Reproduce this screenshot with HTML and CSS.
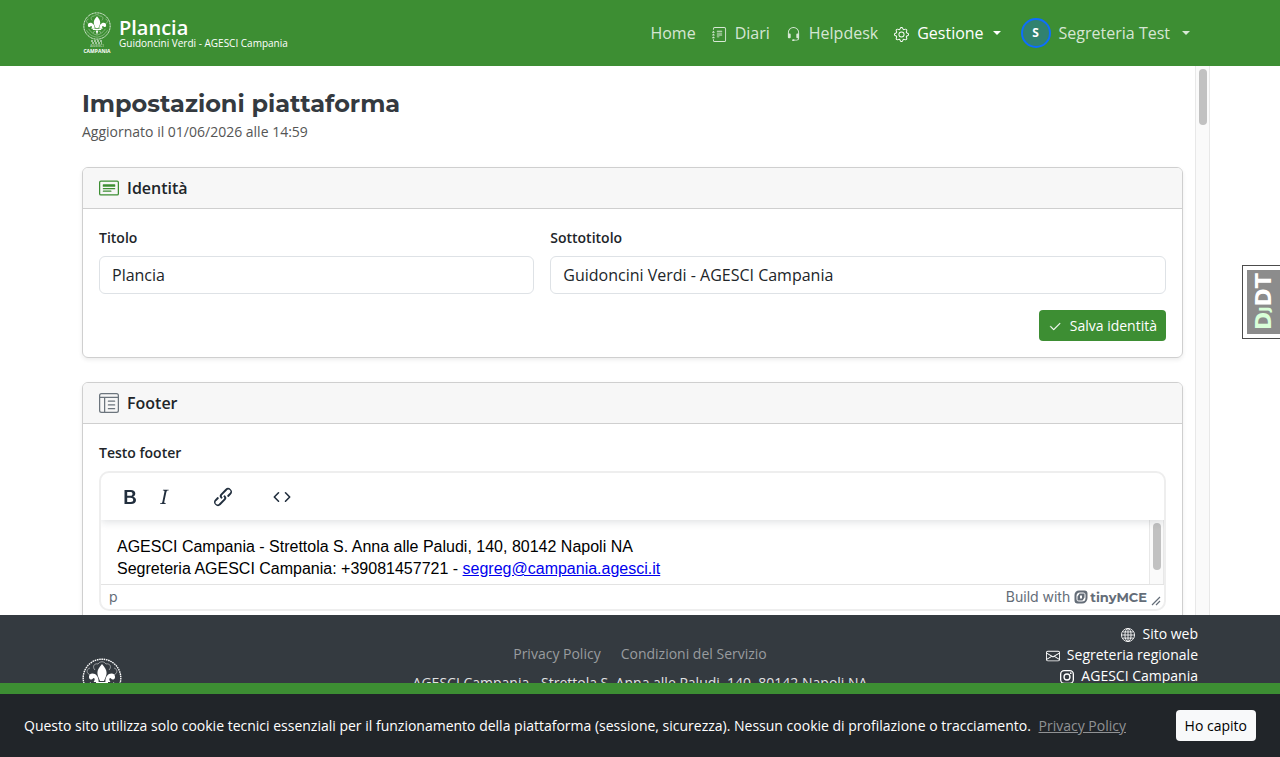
FILE: index.html
```html
<!DOCTYPE html>
<html lang="it">
<head>
    <meta charset="UTF-8">
    <meta name="viewport" content="width=device-width, initial-scale=1.0">
    <title>Impostazioni piattaforma</title>
    <link rel="stylesheet" href="styles.css">
</head>
<body>

<svg class="sprite" aria-hidden="true">
    <symbol id="emblem" viewBox="0 0 40 40">
        <circle cx="20" cy="20" r="18.8" fill="none" stroke="currentColor" stroke-width="1.4" stroke-dasharray="1.6 .7"/>
        <path d="M13 12c-3-3-1-7 3-6 2-3 6-3 8 0 4-1 6 3 3 6M9 17c-5-1-5-6-1-7M31 17c5-1 5-6 1-7M5 26c4 7 9 9 15 10 6-1 11-3 15-10M8 24c4 6 8 8 12 9 4-1 8-3 12-9" fill="none" stroke="currentColor" stroke-width=".7" opacity=".7"/>
        <path d="M20 6c-3 3.500-4.600 6-4.600 9 0 3 1.600 5 2.600 8h4c1-3 2.600-5 2.600-8 0-3-1.600-5.500-4.600-9z" fill="currentColor"/>
        <path d="M16.600 23c0-4-2.600-7.500-6-7.500-2.600 0-4 2-3.600 4 .4 2.300 3 2.800 4 1 .6-1.200 2-.4 1.600 1.500-.2.800-.6 1.400-1 2h5zM23.400 23c0-4 2.600-7.500 6-7.500 2.600 0 4 2 3.600 4-.4 2.300-3 2.800-4 1-.6-1.200-2-.4-1.600 1.500.2.800.6 1.400 1 2h-5z" fill="currentColor"/>
        <path d="M14 24h12v1.600H14zM18 26.500h4l-2 6zM16.500 26.500c0 2-1 3-2.500 3.500M23.500 26.500c0 2 1 3 2.500 3.500" fill="currentColor"/>
    </symbol>
    <symbol id="journal" viewBox="0 0 16 16">
        <path d="M5 10.500a.5.5 0 0 1 .5-.5h2a.5.5 0 0 1 0 1h-2a.5.5 0 0 1-.5-.5m0-2a.5.5 0 0 1 .5-.5h5a.5.5 0 0 1 0 1h-5a.5.5 0 0 1-.5-.5m0-2a.5.5 0 0 1 .5-.5h5a.5.5 0 0 1 0 1h-5a.5.5 0 0 1-.5-.5m0-2a.5.5 0 0 1 .5-.5h5a.5.5 0 0 1 0 1h-5a.5.5 0 0 1-.5-.5"/>
        <path d="M3 0h10a2 2 0 0 1 2 2v12a2 2 0 0 1-2 2H3a2 2 0 0 1-2-2v-1h1v1a1 1 0 0 0 1 1h10a1 1 0 0 0 1-1V2a1 1 0 0 0-1-1H3a1 1 0 0 0-1 1v1H1V2a2 2 0 0 1 2-2"/>
        <path d="M1 5v-.5a.5.5 0 0 1 1 0V5h.5a.5.5 0 0 1 0 1h-2a.5.5 0 0 1 0-1zm0 3v-.5a.5.5 0 0 1 1 0V8h.5a.5.5 0 0 1 0 1h-2a.5.5 0 0 1 0-1zm0 3v-.5a.5.5 0 0 1 1 0v.5h.5a.5.5 0 0 1 0 1h-2a.5.5 0 0 1 0-1z"/>
    </symbol>
    <symbol id="headset" viewBox="0 0 16 16">
        <path d="M8 1a5 5 0 0 0-5 5v1h1a1 1 0 0 1 1 1v3a1 1 0 0 1-1 1H3a1 1 0 0 1-1-1V6a6 6 0 1 1 12 0v6a2.500 2.500 0 0 1-2.500 2.500H9.366a1 1 0 0 1-.866.5h-1a1 1 0 1 1 0-2h1a1 1 0 0 1 .866.5H11.500A1.500 1.500 0 0 0 13 12h-1a1 1 0 0 1-1-1V8a1 1 0 0 1 1-1h1V6a5 5 0 0 0-5-5"/>
    </symbol>
    <symbol id="gear" viewBox="0 0 16 16">
        <path d="M8 4.754a3.246 3.246 0 1 0 0 6.492 3.246 3.246 0 0 0 0-6.492M5.754 8a2.246 2.246 0 1 1 4.492 0 2.246 2.246 0 0 1-4.492 0"/>
        <path d="M9.796 1.343c-.527-1.790-3.065-1.790-3.592 0l-.094.319a.873.873 0 0 1-1.255.52l-.292-.16c-1.640-.892-3.433.902-2.540 2.541l.159.292a.873.873 0 0 1-.52 1.255l-.319.094c-1.790.527-1.790 3.065 0 3.592l.319.094a.873.873 0 0 1 .52 1.255l-.16.292c-.892 1.640.901 3.434 2.541 2.540l.292-.159a.873.873 0 0 1 1.255.52l.094.319c.527 1.790 3.065 1.790 3.592 0l.094-.319a.873.873 0 0 1 1.255-.52l.292.16c1.640.893 3.434-.902 2.540-2.541l-.159-.292a.873.873 0 0 1 .52-1.255l.319-.094c1.790-.527 1.790-3.065 0-3.592l-.319-.094a.873.873 0 0 1-.52-1.255l.16-.292c.893-1.640-.902-3.433-2.541-2.540l-.292.159a.873.873 0 0 1-1.255-.52zm-2.633.283c.246-.835 1.428-.835 1.674 0l.094.319a1.873 1.873 0 0 0 2.693 1.115l.291-.16c.764-.415 1.600.42 1.184 1.185l-.159.292a1.873 1.873 0 0 0 1.116 2.692l.318.094c.835.246.835 1.428 0 1.674l-.319.094a1.873 1.873 0 0 0-1.115 2.693l.16.291c.415.764-.42 1.600-1.185 1.184l-.291-.159a1.873 1.873 0 0 0-2.693 1.116l-.094.318c-.246.835-1.428.835-1.674 0l-.094-.319a1.873 1.873 0 0 0-2.692-1.115l-.292.16c-.764.415-1.600-.42-1.184-1.185l.159-.291A1.873 1.873 0 0 0 1.945 8.930l-.319-.094c-.835-.246-.835-1.428 0-1.674l.319-.094A1.873 1.873 0 0 0 3.060 4.377l-.16-.292c-.415-.764.42-1.600 1.185-1.184l.292.159a1.873 1.873 0 0 0 2.692-1.115z"/>
    </symbol>
    <symbol id="card-heading" viewBox="0 0 16 16">
        <path d="M14.500 3a.5.5 0 0 1 .5.5v9a.5.5 0 0 1-.5.5h-13a.5.5 0 0 1-.5-.5v-9a.5.5 0 0 1 .5-.5zm-13-1A1.500 1.500 0 0 0 0 3.500v9A1.500 1.500 0 0 0 1.500 14h13a1.500 1.500 0 0 0 1.500-1.500v-9A1.500 1.500 0 0 0 14.500 2z"/>
        <path d="M3 8.500a.5.5 0 0 1 .5-.5h9a.5.5 0 0 1 0 1h-9a.5.5 0 0 1-.5-.5m0 2a.5.5 0 0 1 .5-.5h6a.5.5 0 0 1 0 1h-6a.5.5 0 0 1-.5-.5m0-5a.5.5 0 0 1 .5-.5h9a.5.5 0 0 1 .5.5v1a.5.5 0 0 1-.5.5h-9a.5.5 0 0 1-.5-.5z"/>
    </symbol>
    <symbol id="layout-sidebar" viewBox="0 0 16 16">
        <path d="M12.500 6a.5.5 0 0 1 0 1h-5a.5.5 0 0 1 0-1zm0 3a.5.5 0 0 1 0 1h-5a.5.5 0 0 1 0-1zm0 3a.5.5 0 0 1 0 1h-5a.5.5 0 0 1 0-1z"/>
        <path d="M2 0a2 2 0 0 0-2 2v12a2 2 0 0 0 2 2h12a2 2 0 0 0 2-2V2a2 2 0 0 0-2-2zm12 1a1 1 0 0 1 1 1v1H1V2a1 1 0 0 1 1-1zm1 3v10a1 1 0 0 1-1 1H5V4zM4 4v11H2a1 1 0 0 1-1-1V4z"/>
    </symbol>
    <symbol id="check" viewBox="0 0 16 16">
        <path d="M13.854 3.646a.5.5 0 0 1 0 .708l-7 7a.5.5 0 0 1-.708 0l-3.500-3.500a.5.5 0 1 1 .708-.708L6.500 10.293l6.646-6.647a.5.5 0 0 1 .708 0" stroke="currentColor" stroke-width=".4"/>
    </symbol>
    <symbol id="globe" viewBox="0 0 16 16">
        <g fill="none" stroke="currentColor">
            <circle cx="8" cy="8" r="7.500"/>
            <ellipse cx="8" cy="8" rx="3.500" ry="7.500"/>
            <path d="M8 .5v15M.5 8h15M1.700 4.500h12.600M1.700 11.500h12.600"/>
        </g>
    </symbol>
    <symbol id="envelope" viewBox="0 0 16 16">
        <path d="M0 4a2 2 0 0 1 2-2h12a2 2 0 0 1 2 2v8a2 2 0 0 1-2 2H2a2 2 0 0 1-2-2zm2-1a1 1 0 0 0-1 1v.217l7 4.200 7-4.200V4a1 1 0 0 0-1-1zm13 2.383-4.708 2.825L15 11.105zm-.034 6.876-5.640-3.471L8 9.583l-1.326-.795-5.640 3.470A1 1 0 0 0 2 13h12a1 1 0 0 0 .966-.741M1 11.105l4.708-2.897L1 5.383z"/>
    </symbol>
    <symbol id="instagram" viewBox="0 0 16 16">
        <rect x=".75" y=".75" width="14.500" height="14.500" rx="4" fill="none" stroke="currentColor" stroke-width="1.500"/>
        <circle cx="8" cy="8" r="3.400" fill="none" stroke="currentColor" stroke-width="1.500"/>
        <circle cx="12.300" cy="3.700" r="1"/>
    </symbol>
</svg>

<header class="navbar">
    <div class="container navbar-inner">
        <a class="brand" href="#">
            <span class="brand-logo">
                <svg class="brand-emblem"><use href="#emblem"/></svg>
                <svg class="brand-base" viewBox="0 0 30 14" aria-hidden="true">
                    <path d="M9 1h12M10 3h10" stroke="currentColor" stroke-width="1" stroke-dasharray="2 1"/>
                    <text x="15" y="7" class="logo-small">AGESCI</text>
                    <text x="15" y="13" class="logo-region">CAMPANIA</text>
                </svg>
            </span>
            <span class="brand-text">
                <strong class="brand-title">Plancia</strong>
                <span class="brand-subtitle">Guidoncini Verdi - AGESCI Campania</span>
            </span>
        </a>
        <nav class="nav">
            <a class="nav-link" href="#">Home</a>
            <a class="nav-link" href="#"><svg class="icon"><use href="#journal"/></svg>Diari</a>
            <a class="nav-link" href="#"><svg class="icon"><use href="#headset"/></svg>Helpdesk</a>
            <a class="nav-link active" href="#"><svg class="icon"><use href="#gear"/></svg>Gestione<span class="caret"></span></a>
            <a class="nav-link user" href="#"><span class="avatar">S</span>Segreteria Test<span class="caret user-caret"></span></a>
        </nav>
    </div>
</header>

<div class="container page">
    <main class="content">
        <h1 class="page-title">Impostazioni piattaforma</h1>
        <p class="updated">Aggiornato il 01/06/2026 alle 14:59</p>

        <section class="card">
            <h2 class="card-header"><svg class="card-icon green"><use href="#card-heading"/></svg>Identità</h2>
            <form class="card-body">
                <div class="form-row">
                    <div class="field field-title">
                        <label class="label" for="titolo">Titolo</label>
                        <input class="input" type="text" id="titolo" value="Plancia">
                    </div>
                    <div class="field field-subtitle">
                        <label class="label" for="sottotitolo">Sottotitolo</label>
                        <input class="input" type="text" id="sottotitolo" value="Guidoncini Verdi - AGESCI Campania">
                    </div>
                </div>
                <div class="actions">
                    <button class="btn btn-green" type="button"><svg class="icon-check"><use href="#check"/></svg>Salva identità</button>
                </div>
            </form>
        </section>

        <section class="card">
            <h2 class="card-header"><svg class="card-icon gray"><use href="#layout-sidebar"/></svg>Footer</h2>
            <div class="card-body">
                <div class="label" id="footer-label">Testo footer</div>
                <div class="editor">
                    <div class="toolbar">
                        <button class="tool" type="button" aria-label="Grassetto">
                            <svg viewBox="0 0 24 24"><path fill-rule="evenodd" d="M6.500 5h6.300c2.800 0 4.500 1.300 4.500 3.600 0 1.500-.8 2.600-2.100 3.100 1.700.4 2.800 1.600 2.800 3.400 0 2.500-1.900 3.900-4.900 3.900H6.500zm2.700 2.100v3.700h3c1.500 0 2.300-.7 2.300-1.900s-.8-1.800-2.200-1.800zm0 5.700v4.100h3.500c1.600 0 2.500-.7 2.500-2s-1-2.100-2.700-2.100z"/></svg>
                        </button>
                        <button class="tool" type="button" aria-label="Corsivo">
                            <svg viewBox="0 0 24 24"><path d="m16.700 4.700-.1.900h-.3c-.6 0-1 0-1.400.3-.3.300-.4.600-.5 1.100l-2.100 9.800v.6c0 .5.400.8 1.400.8h.2l-.2.800H8l.2-.8h.2c1.100 0 1.800-.5 2-1.500l2-9.800.1-.5c0-.6-.4-.8-1.400-.8h-.3l.2-.9z"/></svg>
                        </button>
                        <button class="tool tool-group" type="button" aria-label="Inserisci link">
                            <svg viewBox="0 0 24 24"><path d="M6.200 12.300a1 1 0 0 1 1.400 1.400l-2 2a2 2 0 1 0 2.600 2.800l4.800-4.800a1 1 0 0 0 0-1.400 1 1 0 1 1 1.400-1.300 2.900 2.900 0 0 1 0 4L9.600 20a3.900 3.900 0 0 1-5.500-5.500zm11.600-.6a1 1 0 0 1-1.400-1.400l2-2a2 2 0 1 0-2.600-2.800L11 10.300a1 1 0 0 0 0 1.400A1 1 0 1 1 9.600 13a2.900 2.900 0 0 1 0-4L14.400 4a3.900 3.900 0 0 1 5.500 5.500z"/></svg>
                        </button>
                        <button class="tool tool-group" type="button" aria-label="Codice sorgente">
                            <svg viewBox="0 0 24 24"><path d="M8.500 7.800 4.300 12l4.200 4.200M15.500 7.800l4.200 4.200-4.200 4.200" fill="none" stroke="currentColor" stroke-width="1.600" stroke-linecap="round" stroke-linejoin="round"/></svg>
                        </button>
                    </div>
                    <div class="edit-area">
                        <div class="edit-text" role="textbox" contenteditable="true" spellcheck="false" aria-labelledby="footer-label">AGESCI Campania - Strettola S. Anna alle Paludi, 140, 80142 Napoli NA<br>Segreteria AGESCI Campania: +39081457721 - <a href="mailto:segreg@campania.agesci.it">segreg@campania.agesci.it</a></div>
                        <div class="scrollbar"><div class="thumb thumb-editor"></div></div>
                    </div>
                    <div class="statusbar">
                        <span>p</span>
                        <a class="built-with" href="#">Build with
                            <svg class="tiny-mark" viewBox="0 0 14 14"><path fill-rule="evenodd" d="M5 .5h5.500a3 3 0 0 1 3 3V8a5.500 5.500 0 0 1-5.500 5.500H3.500a3 3 0 0 1-3-3V5A4.500 4.500 0 0 1 5 .5M6 2.500A3.500 3.500 0 0 0 2.500 6v3A2.500 2.500 0 0 0 5 11.500h3A3.500 3.500 0 0 0 11.500 8V5A2.500 2.500 0 0 0 9 2.500z"/><path fill-rule="evenodd" d="M5.500 3.500h5v4l-2 3h-5v-4zM6 5.500v3h2v-3z"/></svg>
                            <span class="tiny-name">tinyMCE</span>
                        </a>
                        <svg class="resize" viewBox="0 0 10 10"><path d="M1 9l8-8M5 9l4-4" stroke="currentColor" stroke-width="1.200"/></svg>
                    </div>
                </div>
            </div>
        </section>
    </main>
    <div class="scrollbar"><div class="thumb thumb-page"></div></div>
</div>

<footer class="footer">
    <div class="container footer-inner">
        <svg class="footer-logo"><use href="#emblem"/></svg>
        <div class="footer-center">
            <div class="footer-links">
                <a href="#">Privacy Policy</a>
                <a href="#">Condizioni del Servizio</a>
            </div>
            <div class="footer-address">AGESCI Campania - Strettola S. Anna alle Paludi, 140, 80142 Napoli NA</div>
        </div>
        <div class="footer-contacts">
            <a href="#"><svg class="icon-sm"><use href="#globe"/></svg>Sito web</a>
            <a href="#"><svg class="icon-sm"><use href="#envelope"/></svg>Segreteria regionale</a>
            <a href="#"><svg class="icon-sm"><use href="#instagram"/></svg>AGESCI Campania</a>
        </div>
    </div>
</footer>

<div class="cookie-bar">
    <p class="cookie-text">Questo sito utilizza solo cookie tecnici essenziali per il funzionamento della piattaforma (sessione, sicurezza). Nessun cookie di profilazione o tracciamento. <a class="cookie-link" href="#">Privacy Policy</a></p>
    <button class="btn btn-light" type="button">Ho capito</button>
</div>

<a class="debug-handle" href="#"><span class="debug-label"><span class="debug-d">D</span><span class="debug-j">J</span>DT</span></a>

</body>
</html>
```
FILE: styles.css
```css
* {
    box-sizing: border-box;
}
body {
    margin: 0;
    height: 100vh;
    display: flex;
    flex-direction: column;
    overflow: hidden;
    background: #fff;
    color: #212529;
    font-family: "Open Sans", "Noto Sans", sans-serif;
    font-size: 16px;
    line-height: 24px;
}
a {
    color: inherit;
    text-decoration: none;
}
svg {
    fill: currentColor;
    flex: none;
}
.sprite {
    position: absolute;
    width: 0;
    height: 0;
}
.container {
    width: 100%;
    max-width: 1140px;
    margin: 0 auto;
    padding: 0 12px;
}

/* navbar */
.navbar {
    flex: none;
    background: #3d8e33;
    color: #fff;
}
.navbar-inner {
    display: flex;
    align-items: center;
    justify-content: space-between;
    min-height: 66px;
}
.brand {
    display: flex;
    align-items: center;
    gap: 8px;
}
.brand-logo {
    display: flex;
    flex-direction: column;
    align-items: center;
    width: 29px;
}
.brand-emblem {
    width: 28px;
    height: 28px;
}
.brand-base {
    width: 30px;
    height: 14px;
}
.logo-small, .logo-region {
    text-anchor: middle;
    font-weight: bold;
    font-family: "Open Sans", sans-serif;
}
.logo-small {
    font-size: 4px;
    opacity: 0.5;
}
.logo-region {
    font-size: 5px;
}
.brand-text {
    display: flex;
    flex-direction: column;
}
.brand-title {
    font-size: 20px;
    font-weight: 600;
    line-height: 21px;
}
.brand-subtitle {
    font-size: 10px;
    font-weight: 500;
    line-height: 11px;
}
.nav {
    display: flex;
    align-items: center;
}
.nav-link {
    display: flex;
    align-items: center;
    padding: 8px;
    color: rgba(255, 255, 255, 0.8);
}
.nav-link.active {
    color: #fff;
}
.icon {
    width: 15px;
    height: 15px;
    margin: 2px 8px 0 0;
}
.caret {
    margin-left: 9px;
    border: 4px solid transparent;
    border-top-color: currentColor;
    border-bottom: 0;
}
.user {
    margin-left: 4px;
}
.user-caret {
    margin-left: 12px;
}
.avatar {
    width: 30px;
    height: 30px;
    margin-right: 8px;
    border: 2px solid #0d6efd;
    border-radius: 50%;
    background: #31826f;
    color: #fff;
    font-size: 12px;
    font-weight: 700;
    line-height: 26px;
    text-align: center;
}

/* page */
.page {
    flex: 1;
    min-height: 0;
    display: flex;
    padding-right: 0;
    overflow: hidden;
}
.content {
    flex: 1;
    padding: 24px 12px 0 0;
}
.scrollbar {
    flex: none;
    width: 15px;
    padding: 3px;
    border: solid #e8e8e8;
    border-width: 0 1px;
    background: #fafafa;
}
.thumb {
    width: 8px;
    margin: 0 auto;
    border-radius: 4px;
    background: #c1c1c1;
}
.thumb-page {
    height: 56px;
}
.thumb-editor {
    height: 47px;
}
.page-title {
    margin: 0 0 3px;
    color: #343a40;
    font-family: Montserrat, Inter, sans-serif;
    font-size: 24px;
    font-weight: 700;
    line-height: 28px;
}
.updated {
    margin: 0 0 25px;
    color: #555;
    font-size: 14px;
    line-height: 21px;
}
.card {
    margin-bottom: 24px;
    border: 1px solid #cfcfcf;
    border-radius: 6px;
    box-shadow: 0 2px 4px rgba(0, 0, 0, 0.075);
}
.card-header {
    display: flex;
    align-items: center;
    gap: 8px;
    margin: 0;
    padding: 8px 16px;
    border-bottom: 1px solid #cfcfcf;
    border-radius: 5px 5px 0 0;
    background: #f7f7f7;
    font-size: 16px;
    font-weight: 600;
}
.card-icon {
    width: 20px;
    height: 20px;
}
.green {
    color: #3d8e33;
}
.gray {
    color: #6c757d;
}
.card-body {
    padding: 16px;
}
.form-row {
    display: grid;
    grid-template-columns: repeat(12, 1fr);
    gap: 16px;
}
.field-title {
    grid-column: span 5;
}
.field-subtitle {
    grid-column: span 7;
}
.label {
    display: block;
    margin-bottom: 6px;
    font-size: 14px;
    font-weight: 600;
    line-height: 25px;
}
.input {
    display: block;
    width: 100%;
    height: 38px;
    padding: 6px 12px;
    border: 1px solid #dee2e6;
    border-radius: 6px;
    background: #fff;
    color: #212529;
    font: inherit;
}
.actions {
    display: flex;
    justify-content: flex-end;
    margin-top: 16px;
}
.btn {
    display: flex;
    align-items: center;
    flex: none;
    padding: 4px 8px;
    border: 1px solid transparent;
    border-radius: 4px;
    font-family: inherit;
    font-size: 14px;
    line-height: 21px;
}
.btn-green {
    background: #3d8e33;
    color: #fff;
    font-weight: 500;
}
.btn-light {
    background: #f8f9fa;
    color: #000;
}
.icon-check {
    width: 14px;
    height: 14px;
    margin: 2px 8px 0 0;
}

/* editor */
.editor {
    display: flex;
    flex-direction: column;
    border: 2px solid #eee;
    border-radius: 10px;
    overflow: hidden;
    color: #222f3e;
}
.toolbar {
    display: flex;
    align-items: center;
    z-index: 1;
    padding: 7px 12px 6px;
    box-shadow: 0 2px 8px rgba(34, 47, 62, 0.15);
}
.tool {
    display: flex;
    width: 34px;
    padding: 5px;
    border: 0;
    background: none;
    color: inherit;
}
.tool svg {
    width: 24px;
    height: 24px;
}
.tool-group {
    margin-left: 25px;
}
.edit-area {
    display: flex;
    height: 64px;
}
.edit-text {
    flex: 1;
    padding: 16px;
    color: #000;
    font-family: "Liberation Sans", Arial, sans-serif;
    font-size: 16px;
    line-height: 22px;
    overflow: hidden;
}
.edit-text a {
    color: #00e;
    text-decoration: underline;
}
.statusbar {
    display: flex;
    align-items: center;
    height: 25px;
    padding: 0 3px 0 8px;
    border-top: 1px solid #e3e3e3;
    color: #646d78;
    font-family: Inter, sans-serif;
    font-size: 14px;
}
.built-with {
    display: flex;
    align-items: center;
    margin-left: auto;
    gap: 4px;
}
.tiny-mark {
    width: 14px;
    height: 14px;
}
.tiny-name {
    margin-left: -2px;
    font-family: Montserrat, Inter, sans-serif;
    font-size: 13px;
    font-weight: 700;
}
.resize {
    align-self: flex-end;
    width: 10px;
    height: 10px;
    margin: 0 0 3px 4px;
}

/* footer */
.footer {
    flex: none;
    height: 68px;
    overflow: hidden;
    background: #343a40;
    color: #fff;
    font-size: 14px;
    line-height: 21px;
}
.footer-inner {
    display: grid;
    grid-template-columns: 1fr auto 1fr;
    padding-top: 8px;
}
.footer-logo {
    width: 40px;
    height: 40px;
    margin-top: 35px;
}
.footer-center {
    padding-top: 20px;
    text-align: center;
}
.footer-links {
    display: flex;
    justify-content: center;
    gap: 20px;
    margin-bottom: 8px;
    color: #999c9f;
}
.footer-address {
    color: #e1e2e3;
}
.footer-contacts {
    display: flex;
    flex-direction: column;
    align-items: flex-end;
}
.footer-contacts a {
    display: flex;
    align-items: center;
}
.icon-sm {
    width: 14px;
    height: 14px;
    margin: 2px 7px 0 0;
}

/* cookie bar */
.cookie-bar {
    flex: none;
    display: flex;
    align-items: center;
    justify-content: space-between;
    gap: 16px;
    padding: 16px 24px;
    border-top: 11px solid #3d8e33;
    background: #212529;
    color: #fff;
    font-size: 14px;
    line-height: 21px;
}
.cookie-text {
    margin: 0;
}
.cookie-link {
    margin-left: 4px;
    color: #909294;
    text-decoration: underline;
}

/* debug toolbar handle, pinned over the page */
.debug-handle {
    position: fixed;
    top: 265px;
    right: 0;
    padding: 4px 0 4px 4px;
    border: 1px solid #111;
    border-right: 0;
    background: #fff;
    opacity: 0.75;
}
.debug-label {
    display: block;
    width: 33px;
    height: 64px;
    background: #666;
    color: #fff;
    font-family: "DejaVu Sans", sans-serif;
    font-size: 22px;
    font-weight: 700;
    line-height: 33px;
    text-align: center;
    writing-mode: vertical-rl;
    transform: rotate(180deg);
}
.debug-d {
    color: #cfc;
}
.debug-j {
    color: #cfc;
    font-size: 14px;
}
```
